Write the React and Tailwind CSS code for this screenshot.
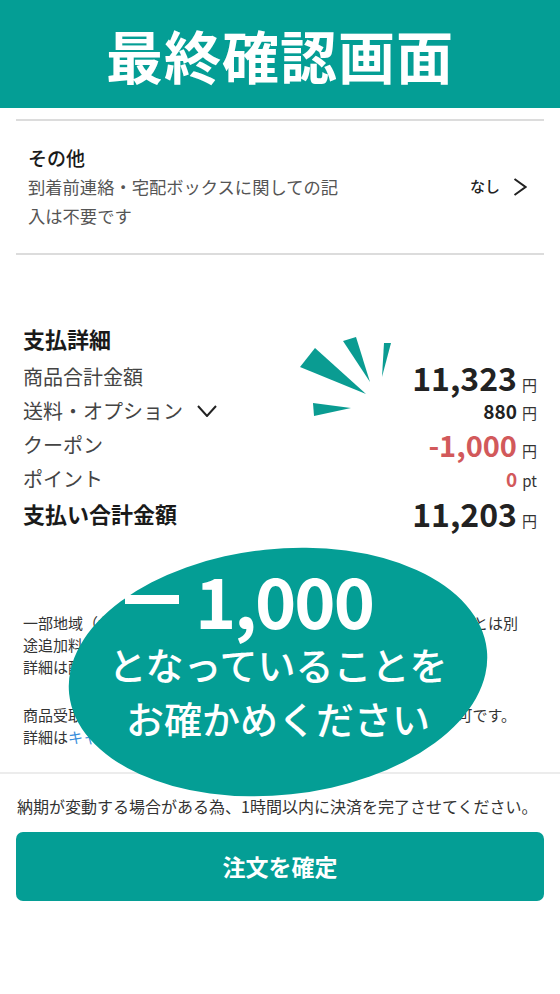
const JP = { fontFamily: '"Noto Sans CJK JP", "Noto Sans", sans-serif' };

function Yen({ children = '円' }) {
  return <span className="ml-[5px] text-[15px] font-normal text-[#333]">{children}</span>;
}

function Burst() {
  return (
    <svg className="absolute left-[290px] top-[325px]" width="120" height="100" viewBox="0 0 120 100">
      <g fill="#0a9c92">
        <polygon points="10,42 25,23 76,69" />
        <polygon points="53,16 66,12 80,57" />
        <polygon points="94,18 101,18 92,52" />
        <polygon points="23,78 24,91 61,83" />
      </g>
    </svg>
  );
}

function PayRow({ label, bold, right, chevron }) {
  return (
    <div className="flex h-[34px] items-center justify-between">
      <div className={bold ? 'flex items-center text-[22px] font-bold text-[#1a1a1a]' : 'flex items-center text-[20px] text-[#444]'}>
        {label}
        {chevron && (
          <svg className="ml-[14px]" width="20" height="12" viewBox="0 0 20 12">
            <polyline points="1,1 10,11 19,1" fill="none" stroke="#222" strokeWidth="2" />
          </svg>
        )}
      </div>
      <div className="flex items-baseline">{right}</div>
    </div>
  );
}

export default function App() {
  return (
    <div className="relative h-[994px] w-[560px] overflow-hidden bg-white" style={JP}>
      <header className="flex h-[108px] items-center justify-center bg-[#049e95]">
        <h1 className="text-[57px] font-bold leading-none tracking-[1px] text-white">最終確認画面</h1>
      </header>

      <div className="mx-4 mt-[11px] h-[2px] bg-[#dcdcdc]" />

      <section className="pl-[28px] pr-[33px] pt-[23px] pb-[23px]">
        <div className="text-[19px] font-medium leading-[28px] text-[#1a1a1a]">その他</div>
        <div className="flex items-start justify-between">
          <p className="w-[330px] shrink-0 whitespace-nowrap text-[17.3px] leading-[29px] text-[#555]">
            到着前連絡・宅配ボックスに関しての記
            <br />
            入は不要です
          </p>
          <div className="flex h-[29px] items-center">
            <span className="text-[15px] font-medium text-[#222]">なし</span>
            <svg className="ml-[13px]" width="14" height="18" viewBox="0 0 14 18">
              <polyline points="1.5,1 12.5,9 1.5,17" fill="none" stroke="#222" strokeWidth="2" />
            </svg>
          </div>
        </div>
      </section>

      <div className="mx-4 h-[2px] bg-[#dcdcdc]" />

      <section className="px-[23px] pt-[67px]">
        <h2 className="mb-[6px] text-[22px] font-bold leading-[32px] text-[#1a1a1a]">支払詳細</h2>
        <PayRow
          label="商品合計金額"
          right={<><span className="text-[32px] font-bold text-[#222]">11,323</span><Yen /></>}
        />
        <PayRow
          label="送料・オプション"
          chevron
          right={<><span className="text-[19px] font-bold text-[#222]">880</span><Yen /></>}
        />
        <PayRow
          label="クーポン"
          right={<><span className="text-[29px] font-bold text-[#d2595b]">-1,000</span><Yen /></>}
        />
        <PayRow
          label="ポイント"
          right={<><span className="text-[19px] font-bold text-[#d2595b]">0</span><Yen>pt</Yen></>}
        />
        <PayRow
          label="支払い合計金額"
          bold
          right={<><span className="text-[32px] font-bold text-[#222]">11,203</span><Yen /></>}
        />
      </section>

      <section className="px-[23px] pt-[82px] text-[15px] leading-[22px] text-[#333]">
        <p className="whitespace-nowrap">
          一部地域（北海道・沖縄・離島など）への配送の場合は、通常送料とは別
          <br />
          途追加料金が発生する場合がございます。
          <br />
          詳細は配送料金についてをご確認ください。
        </p>
        <p className="mt-[26px] whitespace-nowrap">
          商品受取後のお客様都合によるキャンセル・返品・交換は原則不可です。
          <br />
          詳細は<span className="text-[#3b8fdb]">キャンセルポリシー</span>をご確認ください。
        </p>
      </section>

      <div className="mt-[24px] h-[2px] bg-[#ececec]" />

      <p className="mt-[21px] px-[17px] text-[16px] leading-[22px] text-[#333] whitespace-nowrap">
        納期が変動する場合がある為、1時間以内に決済を完了させてください。
      </p>

      <div className="px-4 pt-[15px]">
        <button className="flex h-[69px] w-full items-center justify-center rounded-[7px] bg-[#049e95] text-[23px] font-bold text-white">
          注文を確定
        </button>
      </div>

      <Burst />

      <div className="absolute left-[68px] top-[549px] h-[246px] w-[420px] -rotate-6 rounded-[50%] bg-[#049e95]" />
      <div className="absolute left-[68px] top-[549px] flex h-[246px] w-[420px] flex-col items-center text-white">
        <div className="mt-[8px] flex items-center pr-[58px] text-[70px] font-bold leading-[84px]">
          <span className="mr-[16px] inline-block h-[9px] w-[54px] bg-white" />
          <span className="tracking-[-2px]">1,000</span>
        </div>
        <div className="mt-[-4px] text-[38px] font-medium leading-[54px]">となっていることを</div>
        <div className="text-[38px] font-medium leading-[54px]">お確かめください</div>
      </div>
    </div>
  );
}
